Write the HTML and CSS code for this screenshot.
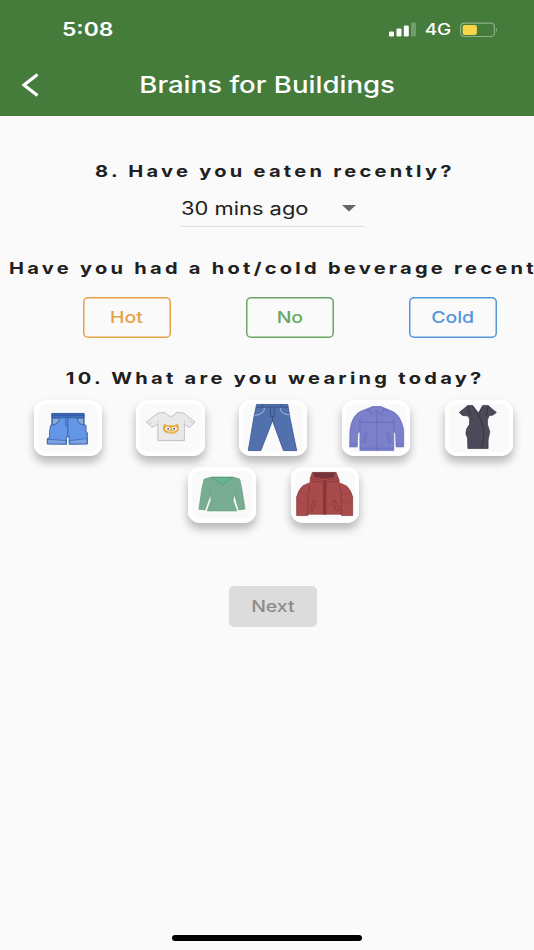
FILE: index.html
```html
<!DOCTYPE html>
<html lang="en">
<head>
    <meta charset="UTF-8">
    <meta name="viewport" content="width=device-width, initial-scale=1.0">
    <title>Brains for Buildings</title>
    <link rel="stylesheet" href="styles.css">
</head>
<body>
    <header>
        <div class="status">
            <span class="wide time">5:08</span>
            <div class="indicators">
                <svg class="signal" width="28" height="15" viewBox="0 0 28 15" fill="#fff">
                    <rect x="0" y="9.5" width="5" height="5" rx="1.3"/>
                    <rect x="7.5" y="6.5" width="5" height="8" rx="1.3"/>
                    <rect x="14.8" y="3.5" width="5" height="11" rx="1.3"/>
                    <rect x="22" y="0.5" width="5" height="14" rx="1.3" opacity=".25"/>
                </svg>
                <span class="wide network">4G</span>
                <svg class="battery" width="38" height="16" viewBox="0 0 38 16">
                    <rect x="0.6" y="1.1" width="33.8" height="13.4" rx="3.6" fill="none" stroke="#8db286" stroke-width="1.2"/>
                    <rect x="2.7" y="2.9" width="14.2" height="10" rx="2" fill="#f8d648"/>
                    <path d="M36 5.5Q38 7.8 36 10Z" fill="#8db286"/>
                </svg>
            </div>
        </div>
        <div class="appbar">
            <svg class="back" width="18" height="24" viewBox="0 0 18 24" fill="none" stroke="#fff" stroke-width="3.2">
                <path d="M15.5 1.5L2 12L15.5 22.5"/>
            </svg>
            <h1><span class="wide">Brains for Buildings</span></h1>
        </div>
    </header>

    <main>
        <h2 class="q-eaten"><span class="wide">8. Have you eaten recently?</span></h2>
        <div class="select">
            <span class="wide">30 mins ago</span>
            <svg width="14" height="7" viewBox="0 0 14 7"><path d="M0 0H14L7 6.5Z" fill="#666"/></svg>
        </div>

        <h2 class="q-drink"><span class="wide">Have you had a hot/cold beverage recent</span></h2>
        <div class="drinks">
            <button class="hot"><span class="wide">Hot</span></button>
            <button class="no"><span class="wide">No</span></button>
            <button class="cold"><span class="wide">Cold</span></button>
        </div>

        <h2 class="q-clothes"><span class="wide">10. What are you wearing today?</span></h2>
        <div class="clothes">
            <!-- shorts -->
            <div class="card">
                <svg viewBox="0 0 206 168">
                    <g stroke="#2f57a0" stroke-width="2.5">
                        <path d="M54 40H151V74L157 76V96L161 98V132L106 133V111H98V133L40 132V116L47 112V94L50 76L54 74Z" fill="#6496e8"/>
                        <path d="M55 54H76Q76 72 55 75ZM150 54H130Q132 72 150 75Z" fill="#8fa9d6"/>
                        <path d="M54 41H151V53H54Z" fill="#4270bd"/>
                        <path d="M54 46H151M102 53V110M96 54V74Q96 80 102 80" fill="none"/>
                        <path d="M42 118L97 122V132L40 132ZM107 122L160 116V132L107 132Z" fill="#7da3e2" stroke-width="1.8"/>
                    </g>
                </svg>
            </div>
            <!-- t-shirt -->
            <div class="card">
                <svg viewBox="0 0 206 168">
                    <path d="M66 39L88 37Q105 62 122 37L144 39L178 66L161 83L146 73V122H66V73L49 82L31 66Z" fill="#e9e9ea" stroke="#a6a8b5" stroke-width="2"/>
                    <path d="M66 73V60M146 73V60M40 73L48 67M172 71L162 64" fill="none" stroke="#b9bac6" stroke-width="1.5"/>
                    <path d="M84 71L94 76H118L127 70L129 86Q127 101 106 101Q84 101 81 87Z" fill="#e9ad3f"/>
                    <path d="M82 83H130M84 90H128" stroke="#d39b3d" stroke-width="2"/>
                    <ellipse cx="96" cy="86" rx="8" ry="6" fill="#fff"/>
                    <ellipse cx="116" cy="86" rx="8" ry="6" fill="#fff"/>
                    <circle cx="97" cy="86" r="3" fill="#514882"/>
                    <circle cx="115" cy="86" r="3" fill="#514882"/>
                    <path d="M97 95Q102 98 106 94Q110 98 115 95" fill="none" stroke="#fff" stroke-width="2"/>
                </svg>
            </div>
            <!-- jeans -->
            <div class="card">
                <svg viewBox="0 0 206 168">
                    <path d="M53 13H147L154 55L174 152H134L101 62L66 152H28L44 57Z" fill="#5070ae" stroke="#3b5794" stroke-width="2.5"/>
                    <path d="M53 21H148M95 23V49H106V23M101 48V62M70 13V21M128 13V21" fill="none" stroke="#314b83" stroke-width="2.5"/>
                    <path d="M77 23Q76 43 48 46M124 23Q126 43 152 44" fill="none" stroke="#b8c6de" stroke-width="2.5"/>
                </svg>
            </div>
            <!-- jacket -->
            <div class="card">
                <svg viewBox="0 0 206 168">
                    <g fill="#7b80cb" stroke="#6564b8" stroke-width="2">
                        <path d="M60 32Q30 43 24 91L23 141H46L47 102L54 93V152H156V93L162 102L163 141H186V91Q178 43 148 32L119 20H91Z"/>
                        <path d="M92 20L83 29L91 45L105 31L118 45L126 29L118 20Z"/>
                        <path d="M54 67H156M105 32V152M54 145H156M24 132H46M163 132H186M54 94V56M156 94V56M70 33L83 29M141 33L126 29" fill="none"/>
                        <path d="M69 99L75 101L69 128L63 126ZM141 99L135 101L141 128L147 126Z"/>
                    </g>
                </svg>
            </div>
            <!-- dress -->
            <div class="card">
                <svg viewBox="0 0 206 168">
                    <path d="M69 16H83L101 39L114 16H130L155 37L145 45L133 47L128 60V73L135 95L130 120V146H69L68 115L63 101L65 87L74 73V57L70 48L53 46L43 37Z" fill="#4b4a59" stroke="#353442" stroke-width="2"/>
                    <path d="M83 17L107 56Q125 100 110 144M114 17L103 39M69 17L76 46M130 17L125 47" fill="none" stroke="#302f3c" stroke-width="2.5"/>
                </svg>
            </div>
            <!-- sweater -->
            <div class="card">
                <svg viewBox="0 0 206 168">
                    <path d="M49 36L71 30H135L156 36L162 64L172 126L153 129L139 79L136 101L147 132H58L69 101V79L51 129L33 127L42 64Z" fill="#79ad93" stroke="#639b80" stroke-width="2"/>
                    <path d="M71 31H135L104 52Z" fill="#69b58b" stroke="#4b9a70" stroke-width="2"/>
                    <path d="M69 79L65 67M139 79L145 65" fill="none" stroke="#639b80" stroke-width="2"/>
                </svg>
            </div>
            <!-- winter coat -->
            <div class="card">
                <svg viewBox="0 0 206 168">
                    <g stroke="#803338" stroke-width="2">
                        <path d="M64 16H136L145 38V47L168 57Q182 72 186 90V146H152V142H51V146H17V90Q23 67 36 56L58 46V34Z" fill="#a94b4a"/>
                        <path d="M67 17H133L130 30L102 35L70 29Z" fill="#743439"/>
                        <path d="M58 42L98 46V142M145 42L105 46V142M51 142V83L57 55M152 142V83L146 55M61 34L101 41L142 34" fill="none"/>
                        <path d="M99 42H105V142H99Z" fill="#8b383d"/>
                        <path d="M67 100L74 102L66 132L57 130ZM134 100L127 102L137 132L147 130Z" fill="#a94b4a"/>
                        <path d="M58 68H98M54 87H98M106 68H146M106 87H150M76 113H98M106 113H126M27 77L53 82M150 82L176 77M19 106H50M153 106H185" fill="none" stroke="#97403f" stroke-width="1"/>
                    </g>
                </svg>
            </div>
        </div>

        <button class="next" disabled><span class="wide">Next</span></button>
    </main>

    <div class="home-bar"></div>
</body>
</html>
```

FILE: styles.css
```css
* {
    box-sizing: border-box;
}
body {
    display: flex;
    flex-direction: column;
    height: 950px;
    margin: 0;
    overflow: hidden;
    background-color: #fafafa;
    color: #202020;
    font-family: Inter, "Liberation Sans", sans-serif;
}
svg {
    display: block;
}
/* extended letterforms */
.wide {
    display: inline-block;
    white-space: nowrap;
    transform: scaleX(1.216);
}
header {
    height: 116px;
    background-color: #457b3b;
    color: #fff;
    border-bottom: 1px solid #42763a;
}
.status {
    display: flex;
    align-items: center;
    justify-content: space-between;
    height: 58px;
    padding: 1px 36px 0 62px;
}
.time {
    transform-origin: left;
    font-size: 18.8px;
    font-weight: 600;
}
.indicators {
    display: flex;
    align-items: center;
}
.network {
    margin: 0 11px 0 10px;
    font-size: 15.6px;
    font-weight: 500;
}
.appbar {
    display: flex;
    align-items: center;
    height: 53px;
    padding: 0 22px;
}
h1 {
    flex: 1;
    margin: -1px 18px 0 0;
    text-align: center;
    font-size: 22.7px;
    font-weight: 500;
}
main {
    display: flex;
    flex-direction: column;
    align-items: center;
    flex: 1;
}
h2 {
    height: 20px;
    margin: 0;
    font-size: 16.5px;
    line-height: 20px;
    font-weight: 700;
    letter-spacing: 2.68px;
}
.q-eaten {
    margin: 45px 0 0 16px;
}
.select {
    display: flex;
    align-items: center;
    justify-content: space-between;
    width: 184px;
    height: 36px;
    margin: 9.5px 0 0 12px;
    padding-right: 9px;
    border-bottom: 1px solid #e0e0e0;
    font-size: 18px;
}
.select .wide {
    transform-origin: left;
}
.q-drink {
    align-self: flex-start;
    margin: 31px 0 0 9px;
}
.q-drink .wide {
    transform-origin: left;
}
.drinks {
    display: flex;
    gap: 75px;
    margin: 19.5px 0 0 46px;
}
button {
    width: 88px;
    height: 41px;
    padding: 0 0 1px;
    border: 0;
    border-radius: 5px;
    background: none;
    box-shadow: inset 0 0 0 1.5px currentColor;
    font-family: inherit;
    font-size: 16px;
    font-weight: 500;
}
.hot {
    color: #e6a344;
}
.no {
    color: #68a862;
}
.cold {
    color: #5296dc;
}
.q-clothes {
    margin: 30px 0 0 16px;
}
.clothes {
    display: flex;
    flex-wrap: wrap;
    justify-content: center;
    gap: 11px 34.5px;
    margin-top: 12px;
    padding-left: 12.5px;
}
.card {
    width: 68.3px;
    height: 56px;
    border-radius: 13px / 11px;
    background-color: #fafafa;
    box-shadow: inset 0 0 0 4px #fff, 0 6px 10px rgba(0, 0, 0, 0.28);
}
.card svg {
    width: 100%;
    height: 100%;
}
.next {
    margin: 63px 0 0 12.5px;
    background-color: #dcdcdc;
    box-shadow: none;
    color: #8c8c8c;
}
.home-bar {
    width: 190px;
    height: 6px;
    margin: 0 auto 9px;
    border-radius: 3px;
    background-color: #000;
}
```
